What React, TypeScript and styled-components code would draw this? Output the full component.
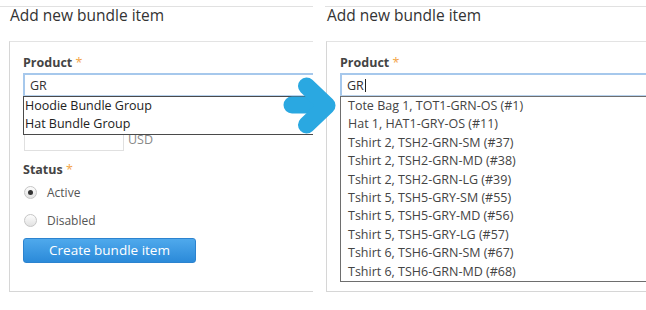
import styled, { createGlobalStyle } from 'styled-components'

const groupMatches = ['Hoodie Bundle Group', 'Hat Bundle Group']

const variantMatches = [
  'Tote Bag 1, TOT1-GRN-OS (#1)',
  'Hat 1, HAT1-GRY-OS (#11)',
  'Tshirt 2, TSH2-GRN-SM (#37)',
  'Tshirt 2, TSH2-GRN-MD (#38)',
  'Tshirt 2, TSH2-GRN-LG (#39)',
  'Tshirt 5, TSH5-GRY-SM (#55)',
  'Tshirt 5, TSH5-GRY-MD (#56)',
  'Tshirt 5, TSH5-GRY-LG (#57)',
  'Tshirt 6, TSH6-GRN-SM (#67)',
  'Tshirt 6, TSH6-GRN-MD (#68)',
]

type Variant = 'plain' | 'padded'

function BundleForm({ matches, variant, caret }: { matches: string[]; variant: Variant; caret?: boolean }) {
  return (
    <>
      <Heading>Add new bundle item</Heading>
      <Card>
        <Field>
          <Label>
            Product <Req>*</Req>
          </Label>
          <Combo>
            <InputBox>
              GR
              {caret && <Caret />}
            </InputBox>
            <Suggestions $variant={variant}>
              {matches.map((m) => (
                <Suggestion key={m} $variant={variant}>
                  {m}
                </Suggestion>
              ))}
            </Suggestions>
          </Combo>
        </Field>

        <Field $top={8}>
          <Label>
            Price <Req>*</Req>
          </Label>
          <PriceRow>
            <PriceInput />
            <Unit>USD</Unit>
          </PriceRow>
        </Field>

        <Field $top={10}>
          <Label>
            Status <Req>*</Req>
          </Label>
          <RadioList>
            <RadioRow>
              <RadioDot $checked />
              Active
            </RadioRow>
            <RadioRow>
              <RadioDot />
              Disabled
            </RadioRow>
          </RadioList>
        </Field>

        <CreateButton>Create bundle item</CreateButton>
      </Card>
    </>
  )
}

export default function App() {
  return (
    <>
      <GlobalStyle />
      <Stage>
        <Panel $width={313} $inset={9}>
          <BundleForm matches={groupMatches} variant="plain" />
        </Panel>
        <Panel $width={321} $inset={1}>
          <BundleForm matches={variantMatches} variant="padded" caret />
        </Panel>

        <Arrow width="56" height="60" viewBox="0 0 56 60">
          <g fill="none" stroke="#2aa8e1" strokeWidth="17" strokeLinecap="round" strokeLinejoin="round">
            <path d="M10 28H38" />
            <path d="M24.5 9L45 28.5L24.5 48" />
          </g>
        </Arrow>
      </Stage>
    </>
  )
}

const GlobalStyle = createGlobalStyle`
  body {
    margin: 0;
    background: #fff;
    font-family: "Open Sans", "Noto Sans", sans-serif;
  }
`

const Stage = styled.div`
  position: relative;
  display: flex;
  gap: 12px;
  width: 646px;
  height: 310px;
  overflow: hidden;
`

// each panel is a cropped screenshot, so only its right side is clipped
const Panel = styled.section<{ $width: number; $inset: number }>`
  flex: none;
  width: ${(p) => p.$width}px;
  margin-top: 6px;
  padding-left: ${(p) => p.$inset}px;
  border-top: 1px solid #e1e1e1;
  box-sizing: border-box;
  clip-path: inset(-10px 0 -10px 0);
  align-self: flex-start;
`

const Heading = styled.h2`
  margin: -2px 0 0;
  padding: 0 0 16px 1px;
  font-size: 15.5px;
  font-weight: 400;
  line-height: 20px;
  color: #333;
  white-space: nowrap;
`

const Card = styled.div`
  width: 420px;
  padding: 12px 0 28px 13px;
  border: 1px solid #d6d6d6;
  border-top-color: #e3e3e3;
  border-right: none;
  box-sizing: border-box;
`

const Field = styled.div<{ $top?: number }>`
  margin-top: ${(p) => p.$top ?? 0}px;
`

const Label = styled.div`
  margin-bottom: 1px;
  font-size: 12.5px;
  font-weight: 700;
  line-height: 18px;
  color: #444;
`

const Req = styled.span`
  color: #f3a447;
  font-weight: 400;
`

const Combo = styled.div`
  position: relative;
`

const InputBox = styled.div`
  display: flex;
  align-items: center;
  height: 23px;
  padding: 1px 5px 0;
  border: 1px solid #b9d3ee;
  border-top: 2px solid #a6c8ec;
  border-left: 2px solid #a6c8ec;
  box-sizing: border-box;
  font-size: 12.5px;
  color: #333;
`

const Caret = styled.span`
  width: 1px;
  height: 13px;
  margin-left: 1px;
  background: #222;
`

const Suggestions = styled.ul<{ $variant: Variant }>`
  position: absolute;
  top: 100%;
  left: 0;
  right: 0;
  z-index: 2;
  margin: 0;
  padding: 0;
  list-style: none;
  background: #fff;
  border: 1px solid ${(p) => (p.$variant === 'plain' ? '#4a4a4a' : '#6e6e6e')};
`

const Suggestion = styled.li<{ $variant: Variant }>`
  padding: 0 ${(p) => (p.$variant === 'plain' ? '1px' : '7px')};
  font-size: 12.5px;
  line-height: 18.4px;
  color: ${(p) => (p.$variant === 'plain' ? '#222' : '#444')};
  white-space: nowrap;
`

const PriceRow = styled.div`
  display: flex;
  align-items: center;
  margin-top: 5px;
  padding-left: 1px;
`

const PriceInput = styled.div`
  width: 100px;
  height: 24px;
  border: 1px solid #e0e0e0;
  box-sizing: border-box;
`

const Unit = styled.span`
  margin-left: 4px;
  font-size: 12.5px;
  color: #888;
`

const RadioList = styled.div`
  display: flex;
  flex-direction: column;
  gap: 10px;
  margin-top: 4px;
`

const RadioRow = styled.label`
  display: flex;
  align-items: center;
  gap: 10px;
  height: 18px;
  padding-left: 1px;
  font-size: 12px;
  color: #555;
`

const RadioDot = styled.span<{ $checked?: boolean }>`
  display: flex;
  align-items: center;
  justify-content: center;
  width: 13px;
  height: 13px;
  border: 1px solid #c6c6c6;
  border-radius: 50%;
  background: linear-gradient(#fdfdfd, #e2e2e2);
  box-sizing: border-box;

  &::after {
    content: '';
    display: ${(p) => (p.$checked ? 'block' : 'none')};
    width: 5px;
    height: 5px;
    border-radius: 50%;
    background: #333;
  }
`

const CreateButton = styled.button`
  display: block;
  width: 173px;
  height: 25px;
  margin-top: 9px;
  padding: 0;
  border: 1px solid #2c83cf;
  border-radius: 3px;
  background: linear-gradient(#4fa9ec, #2b8ad9);
  color: #fff;
  font-family: inherit;
  font-size: 13.5px;
  line-height: 23px;
`

const Arrow = styled.svg`
  position: absolute;
  left: 282px;
  top: 77px;
  z-index: 3;
`
